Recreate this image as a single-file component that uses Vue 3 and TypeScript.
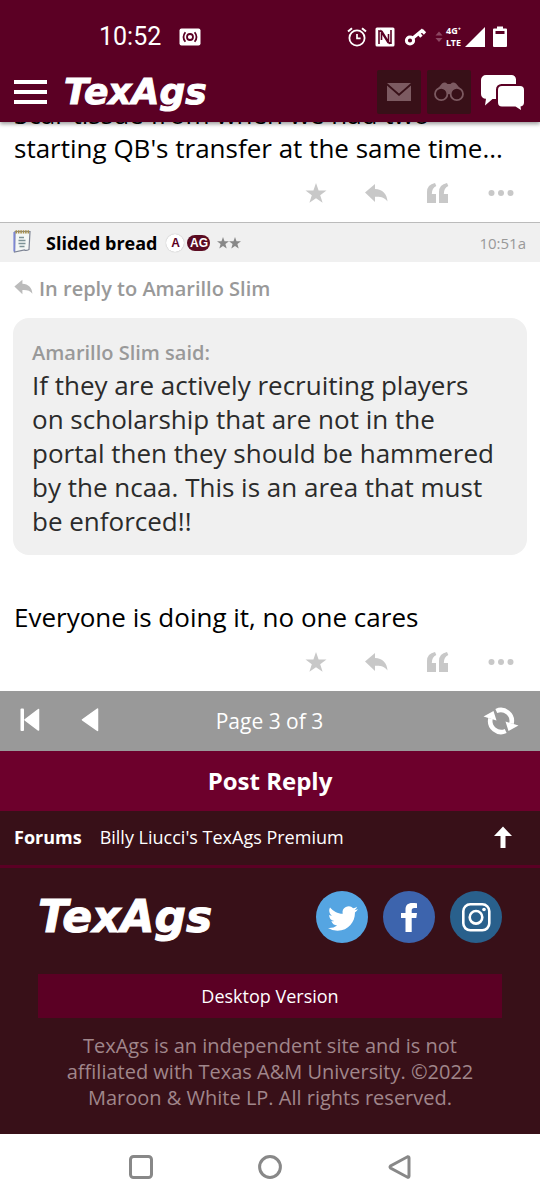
<script setup lang="ts">
interface Post {
  id: number
  body: string
}

const earlier: Post = {
  id: 1,
  body: "starting QB's transfer at the same time...",
}
const quote: string =
  'If they are actively recruiting players on scholarship that are not in the portal then they should be hammered by the ncaa. This is an area that must be enforced!!'
const actions: string[] = ['Star', 'Reply', 'Quote', 'More']
</script>

<template>
  <div class="screen">
    <header class="top">
      <div class="status">
        <span class="clock">10:52</span>
        <svg width="22" height="18" viewBox="0 0 22 18">
          <rect x="0.5" y="0.5" width="21" height="17" rx="2" fill="#fff" />
          <g fill="none" stroke="#5b0024" stroke-width="1.8">
            <circle cx="11" cy="9" r="3" />
            <path d="M6.4 4.2Q2.6 9 6.4 13.8M15.6 4.2Q19.4 9 15.6 13.8" />
          </g>
        </svg>
        <div class="status-right">
          <svg width="20" height="20" viewBox="0 0 20 20" fill="none" stroke="#fff">
            <circle cx="10" cy="11" r="7.6" stroke-width="1.8" />
            <path d="M10 7v4.4h3.6" stroke-width="1.7" />
            <path d="M1 4.6L5 1.2M19 4.6L15 1.2" stroke-width="2" />
          </svg>
          <svg width="20" height="20" viewBox="0 0 20 20">
            <rect x="0.5" y="0.5" width="19" height="19" rx="1.5" fill="#fff" />
            <path d="M4 17V4l3 0.500 6.500 10.500V7M16 3v13l-3-0.500L6.500 5V13" fill="none" stroke="#5b0024" stroke-width="1.6" />
          </svg>
          <svg width="24" height="20" viewBox="0 0 24 20">
            <circle cx="7" cy="13.500" r="3.600" fill="none" stroke="#fff" stroke-width="3" />
            <path d="M10 11L20 2.800M15.800 6.500l2.600 3.200M19 3.500l3 3" fill="none" stroke="#fff" stroke-width="3.200" />
          </svg>
          <div class="network">
            <svg width="8" height="12" viewBox="0 0 8 12" fill="#8d4763">
              <path d="M4 0.500L7.500 4.500h-7zM4 11L.500 7h7z" />
            </svg>
            <span class="lte">4G⁺<br />LTE</span>
            <svg width="20" height="20" viewBox="0 0 20 20" fill="#fff"><path d="M20 0v20H0z" /></svg>
          </div>
          <svg width="14" height="22" viewBox="0 0 14 22">
            <path d="M4 0.500h6v2h3a1 1 0 011 1V20a1 1 0 01-1 1H1a1 1 0 01-1-1V3.500a1 1 0 011-1h3z" fill="#fff" />
            <path d="M2.500 5h9v3h-9z" fill="#5b0024" />
          </svg>
        </div>
      </div>
      <div class="bar">
        <button class="plain" type="button" aria-label="Menu">
          <svg width="33" height="24" viewBox="0 0 33 24" fill="#fff">
            <path d="M0 0h33v4H0zM0 10h33v4H0zM0 20h33v4H0z" />
          </svg>
        </button>
        <a class="logo" href="#">TexAgs</a>
        <div class="tools">
          <button class="tile" type="button" aria-label="Messages">
            <svg width="24" height="18" viewBox="0 0 24 18" fill="#7c5a61">
              <path d="M0 0h24L12 10.500zM0 2.500l12 10.500L24 2.500V18H0z" />
            </svg>
          </button>
          <button class="tile" type="button" aria-label="Watched topics">
            <svg width="30" height="20" viewBox="0 0 30 20">
              <path d="M1 10L8 1.500Q11-.500 13.500 2h3Q19-.500 22 1.500L29 10 22 13 15 12 8 13z" fill="#7c5a61" />
              <g fill="#381018" stroke="#7c5a61" stroke-width="1.800">
                <circle cx="7.200" cy="12" r="6.200" />
                <circle cx="22.800" cy="12" r="6.200" />
              </g>
            </svg>
          </button>
          <button class="plain chat" type="button" aria-label="Forums">
            <svg width="43" height="35" viewBox="0 0 43 35" fill="#fff">
              <path d="M5 0h25.500a4.500 4.500 0 014.500 4.500V9H20.500a5.500 5.500 0 00-5.500 5.500V24h-3.500L4 30.500l1-6.700a4.800 4.800 0 01-5-4.800V5a5 5 0 015-5z" />
              <path d="M21 11h18a4 4 0 014 4v12.500a4 4 0 01-3.500 4l.500 3.500-5.500-3.500H21a4 4 0 01-4-4V15a4 4 0 014-4z" />
            </svg>
          </button>
        </div>
      </div>
    </header>

    <main class="thread">
      <article class="post scrolled">
        <p class="text">Scar tissue from when we had two<br />{{ earlier.body }}</p>
        <div class="actions">
          <button v-for="name in actions" :key="name" class="plain" type="button" :aria-label="name">
            <svg v-if="name === 'Star'" width="22" height="22" viewBox="0 0 22 22"><path d="M11 1l2.600 7.500H21.500l-6.300 4.700 2.400 7.500L11 16.200l-6.600 4.500 2.400-7.500L.500 8.500h7.900z" /></svg>
            <svg v-else-if="name === 'Reply'" width="24" height="20" viewBox="0 0 24 20"><path d="M0 9.500L10 1v5c7.500.500 12 4.500 12.500 12.500C19.500 14.500 16 13.500 10 13.800V19z" /></svg>
            <svg v-else-if="name === 'Quote'" width="22" height="20" viewBox="0 0 22 20"><path d="M0 20V9Q0 1.500 8 0l1.300 3Q4.800 5 4.800 11H9V20zM12 20V9q0-7.500 8-9l1.300 3q-4.500 2-4.500 8H21V20z" /></svg>
            <svg v-else width="28" height="8" viewBox="0 0 28 8"><circle cx="4.500" cy="4" r="3" /><circle cx="14" cy="4" r="3" /><circle cx="23.500" cy="4" r="3" /></svg>
          </button>
        </div>
      </article>

      <article class="post">
        <div class="post-head">
          <svg width="18" height="30" viewBox="0 0 18 30">
            <path d="M2 3.500h15L16 21.500Q13 23 11.500 22L1.500 24z" fill="#f4f7f5" stroke="#7d8494" stroke-width="1.200" />
            <path d="M1.300 4v19.500" stroke="#7c86d2" stroke-width="1.800" />
            <path d="M2.500 3.800h14" stroke="#a58f4e" stroke-width="3.200" stroke-dasharray="1.600 0.800" />
            <path d="M6 9.500h5M5.500 12.500h7M5.500 15.500h7M6.500 18.500h5" stroke="#7c9296" stroke-width="1.400" />
          </svg>
          <a class="author" href="#">Slided bread</a>
          <span class="badges">
            <span class="badge round">A</span>
            <span class="badge pill">AG</span>
          </span>
          <svg width="24" height="12" viewBox="0 0 24 12" fill="#888">
            <path d="M6 0l1.500 4.200h4.500L8.400 7l1.300 4.500L6 8.900l-3.700 2.600L3.600 7 0 4.200h4.500zM18 0l1.500 4.200H24L20.400 7l1.300 4.500L18 8.900l-3.700 2.600L15.600 7 12 4.200h4.500z" />
          </svg>
          <time class="when">10:51a</time>
        </div>
        <a class="reply-to" href="#">
          <svg width="20" height="16" viewBox="0 0 24 20" fill="#bbb"><path d="M0 9.500L10 1v5c7.500.500 12 4.500 12.500 12.500C19.500 14.500 16 13.500 10 13.800V19z" /></svg>
          <span>In reply to Amarillo Slim</span>
        </a>
        <blockquote class="quote">
          <cite>Amarillo Slim said:</cite>
          <p>{{ quote }}</p>
        </blockquote>
        <p class="text">Everyone is doing it, no one cares</p>
        <div class="actions">
          <button v-for="name in actions" :key="name" class="plain" type="button" :aria-label="name">
            <svg v-if="name === 'Star'" width="22" height="22" viewBox="0 0 22 22"><path d="M11 1l2.600 7.500H21.500l-6.300 4.700 2.400 7.500L11 16.200l-6.600 4.500 2.400-7.500L.500 8.500h7.900z" /></svg>
            <svg v-else-if="name === 'Reply'" width="24" height="20" viewBox="0 0 24 20"><path d="M0 9.500L10 1v5c7.500.500 12 4.500 12.500 12.500C19.500 14.500 16 13.500 10 13.800V19z" /></svg>
            <svg v-else-if="name === 'Quote'" width="22" height="20" viewBox="0 0 22 20"><path d="M0 20V9Q0 1.500 8 0l1.300 3Q4.800 5 4.800 11H9V20zM12 20V9q0-7.500 8-9l1.300 3q-4.500 2-4.500 8H21V20z" /></svg>
            <svg v-else width="28" height="8" viewBox="0 0 28 8"><circle cx="4.500" cy="4" r="3" /><circle cx="14" cy="4" r="3" /><circle cx="23.500" cy="4" r="3" /></svg>
          </button>
        </div>
      </article>
    </main>

    <nav class="pager" aria-label="Pages">
      <div class="pager-back">
        <button class="plain" type="button" aria-label="First page">
          <svg width="20" height="26" viewBox="0 0 20 26" fill="#fff" stroke="#fff" stroke-linejoin="round">
            <rect x="0.500" y="0.500" width="3.500" height="22.500" rx="1" stroke="none" />
            <path d="M5 11.800L18.500 1.500v20.600z" stroke-width="1.500" />
          </svg>
        </button>
        <button class="plain" type="button" aria-label="Previous page">
          <svg width="18" height="26" viewBox="0 0 18 26" fill="#fff" stroke="#fff" stroke-linejoin="round">
            <path d="M1.500 11.800L16.500 1v21.500z" stroke-width="1.500" />
          </svg>
        </button>
      </div>
      <span class="page-count">Page 3 of 3</span>
      <button class="plain refresh" type="button" aria-label="Refresh">
        <svg width="36" height="28" viewBox="0 0 36 28">
          <g fill="none" stroke="#fff" stroke-width="4.600">
            <path d="M13.300 4A11 11 0 0128.500 16.500" />
            <path d="M22.700 24A11 11 0 017.500 11.500" />
          </g>
          <path d="M0.500 9.500L10.500 4 13.500 13.500zM35.500 18.500L25.500 24 22.500 14.500z" fill="#fff" />
        </svg>
      </button>
    </nav>
    <button class="post-reply" type="button">Post Reply</button>
    <nav class="crumbs" aria-label="Breadcrumb">
      <a class="strong" href="#">Forums</a>
      <a href="#">Billy Liucci's TexAgs Premium</a>
      <a class="to-top" href="#" aria-label="Back to top">
        <svg width="18" height="22" viewBox="0 0 18 22" fill="#fff"><path d="M9 0.500l9 9.500h-6.500V22h-5V10H0z" /></svg>
      </a>
    </nav>

    <footer class="footer">
      <div class="brand">
        <a class="logo large" href="#">TexAgs</a>
        <div class="social">
          <a href="#" aria-label="Twitter">
            <svg width="52" height="52" viewBox="0 0 52 52">
              <circle cx="26" cy="26" r="26" fill="#55a5e2" />
              <path transform="translate(12 12.500) scale(1.250)" fill="#fff" d="M23.953 4.570a10 10 0 01-2.825.775 4.958 4.958 0 002.163-2.723c-.951.555-2.005.959-3.127 1.184a4.920 4.920 0 00-8.384 4.482C7.690 8.095 4.067 6.130 1.640 3.162a4.822 4.822 0 00-.666 2.475c0 1.710.870 3.213 2.188 4.096a4.904 4.904 0 01-2.228-.616v.060a4.923 4.923 0 003.946 4.827 4.996 4.996 0 01-2.212.085 4.936 4.936 0 004.604 3.417 9.867 9.867 0 01-6.102 2.105c-.390 0-.779-.023-1.170-.067a13.995 13.995 0 007.557 2.209c9.053 0 13.998-7.496 13.998-13.985 0-.210 0-.420-.015-.630A9.935 9.935 0 0024 4.590z" />
            </svg>
          </a>
          <a href="#" aria-label="Facebook">
            <svg width="52" height="52" viewBox="0 0 52 52">
              <circle cx="26" cy="26" r="26" fill="#3d64ad" />
              <path fill="#fff" d="M22.500 41V27H18v-5h4.500v-3.500c0-4.500 2.500-6.600 6.600-6.600 2 0 3.900.200 4.900.400v4.600h-2.600c-2.100 0-2.700 1-2.700 2.600V22H34l-.700 5h-4.600v14z" />
            </svg>
          </a>
          <a href="#" aria-label="Instagram">
            <svg width="52" height="52" viewBox="0 0 52 52">
              <circle cx="26" cy="26" r="26" fill="#29608c" />
              <g fill="none" stroke="#fff" stroke-width="2.600">
                <rect x="13.300" y="13.300" width="26" height="26" rx="7" />
                <circle cx="26" cy="26.300" r="6.300" />
              </g>
              <circle cx="34" cy="18.500" r="1.800" fill="#fff" />
            </svg>
          </a>
        </div>
      </div>
      <button class="desktop" type="button">Desktop Version</button>
      <p class="legal">TexAgs is an independent site and is not affiliated with Texas A&amp;M University. ©2022 Maroon &amp; White LP. All rights reserved.</p>
    </footer>

    <nav class="system" aria-label="System">
      <button class="plain" type="button" aria-label="Recent apps">
        <svg width="24" height="24" viewBox="0 0 24 24"><rect x="1.500" y="1.500" width="21" height="21" rx="3" /></svg>
      </button>
      <button class="plain" type="button" aria-label="Home">
        <svg width="24" height="24" viewBox="0 0 24 24"><circle cx="12" cy="12" r="10.400" /></svg>
      </button>
      <button class="plain" type="button" aria-label="Back">
        <svg width="24" height="24" viewBox="0 0 24 24"><path d="M3.500 11Q2.500 12 3.500 13L20.500 22.200Q22 22.600 22 21V3Q22 1.400 20.500 1.800z" /></svg>
      </button>
    </nav>
  </div>
</template>

<style>
body {
  margin: 0;
  background: #fff;
}
</style>

<style scoped>
.screen {
  font-family: "Open Sans", "Noto Sans", sans-serif;
  color: #000;
}
svg {
  display: block;
  flex: none;
}
a {
  color: inherit;
  text-decoration: none;
}
p,
blockquote {
  margin: 0;
}
button {
  font-family: inherit;
  border: 0;
  cursor: pointer;
}
.plain {
  padding: 0;
  background: none;
}
.top {
  position: relative;
  z-index: 1;
  background: #5b0024;
  color: #fff;
  box-shadow: 0 2px 4px rgba(0, 0, 0, 0.4);
}
.status {
  display: flex;
  align-items: center;
  height: 67px;
  padding: 3px 33px 0 99px;
  gap: 18px;
}
.clock {
  font-family: Roboto, sans-serif;
  font-size: 25px;
  line-height: 30px;
}
.status-right {
  display: flex;
  align-items: center;
  gap: 8px;
  margin-left: auto;
}
.network {
  display: flex;
  align-items: center;
  gap: 3px;
}
.lte {
  width: 16px;
  font-family: "Noto Sans", sans-serif;
  font-size: 9px;
  font-weight: 700;
  line-height: 12px;
}
.bar {
  display: flex;
  align-items: center;
  gap: 17px;
  padding: 0 16px 8px 14px;
}
.logo {
  font-family: "DejaVu Sans", sans-serif;
  font-size: 36px;
  line-height: 40px;
  font-weight: 700;
  font-style: italic;
  color: #fff;
  -webkit-text-stroke: 1px #fff;
}
.logo.large {
  font-size: 44px;
  line-height: 52px;
}
.tools {
  display: flex;
  align-items: center;
  gap: 6px;
  margin-left: auto;
}
.tile {
  display: flex;
  align-items: center;
  justify-content: center;
  width: 44px;
  height: 44px;
  padding: 0;
  border-radius: 2px;
  background: #381018;
}
.chat {
  margin-left: 4px;
}
.thread {
  overflow: hidden;
}
.post {
  background: #fff;
}
.scrolled {
  margin-top: -25px;
}
.text {
  padding: 0 14px;
  font-size: 26px;
  line-height: 34px;
}
.actions {
  display: flex;
  align-items: center;
  justify-content: flex-end;
  gap: 38px;
  height: 55px;
  padding: 0 25px 2px 14px;
  fill: #c8c8c8;
}
.post-head {
  display: flex;
  align-items: center;
  height: 39px;
  padding: 0 14px 0 13px;
  border-top: 1px solid #bbb;
  background: #f0f0f0;
}
.author {
  margin: 0 9px 0 15px;
  font-size: 18px;
  line-height: 24px;
  font-weight: 700;
}
.badges {
  display: flex;
  gap: 3px;
  margin-right: 7px;
}
.badge {
  box-sizing: border-box;
  height: 18px;
  border-radius: 9px;
  font-family: "Liberation Sans", Arial, sans-serif;
  font-size: 12px;
  line-height: 18px;
  font-weight: 700;
  text-align: center;
}
.round {
  width: 18px;
  background: #fff;
  color: #5b0024;
  box-shadow: 0 0 1px #999;
}
.pill {
  width: 23px;
  height: 16px;
  margin-top: 1px;
  line-height: 16px;
  background: #5b0c22;
  color: #fff;
}
.when {
  margin-left: auto;
  font-size: 15px;
  line-height: 20px;
  color: #999;
}
.reply-to {
  display: flex;
  gap: 5px;
  padding: 14px 14px 16px;
  font-size: 20px;
  line-height: 26px;
  font-weight: 600;
  color: #999;
}
.reply-to svg {
  margin-top: 3px;
}
.quote {
  margin: 0 13px 45px;
  padding: 22px 26px 17px 19px;
  border-radius: 16px;
  background: #f0f0f0;
  color: #2b2b2b;
  font-size: 26px;
  line-height: 34px;
}
.quote cite {
  display: block;
  margin-bottom: 2px;
  font-size: 20px;
  line-height: 26px;
  font-style: normal;
  font-weight: 600;
  color: #999;
}
.pager {
  display: grid;
  grid-template-columns: 1fr auto 1fr;
  align-items: center;
  height: 60px;
  padding: 0 21px 0 20px;
  background: #999;
  color: #fff;
}
.pager-back {
  display: flex;
  gap: 41px;
}
.page-count {
  font-size: 21px;
  line-height: 28px;
}
.refresh {
  justify-self: end;
}
.post-reply {
  display: block;
  width: 100%;
  padding: 14px;
  background: #6d002c;
  color: #fff;
  font-size: 24px;
  line-height: 32px;
  font-weight: 700;
}
.crumbs {
  display: flex;
  align-items: center;
  gap: 18px;
  height: 52px;
  padding: 0 28px 2px 14px;
  border-bottom: 3px solid #5b0024;
  background: #381018;
  color: #fff;
  font-size: 18px;
  line-height: 24px;
}
.strong {
  font-weight: 700;
}
.to-top {
  margin-left: auto;
}
.footer {
  padding: 23px 38px;
  background: #381018;
  color: #fff;
}
.brand {
  display: flex;
  align-items: center;
  justify-content: space-between;
}
.social {
  display: flex;
  gap: 15px;
}
.desktop {
  display: block;
  width: 100%;
  margin: 31px 0 15px;
  padding: 10px;
  background: #5b0024;
  color: #fff;
  font-size: 18px;
  line-height: 24px;
}
.legal {
  padding: 0 16px;
  font-size: 20px;
  line-height: 26px;
  text-align: center;
  color: #a0868b;
}
.system {
  display: flex;
  justify-content: center;
  gap: 105px;
  padding: 21px 0;
  background: #fff;
  fill: none;
  stroke: #888;
  stroke-width: 3;
}
</style>
